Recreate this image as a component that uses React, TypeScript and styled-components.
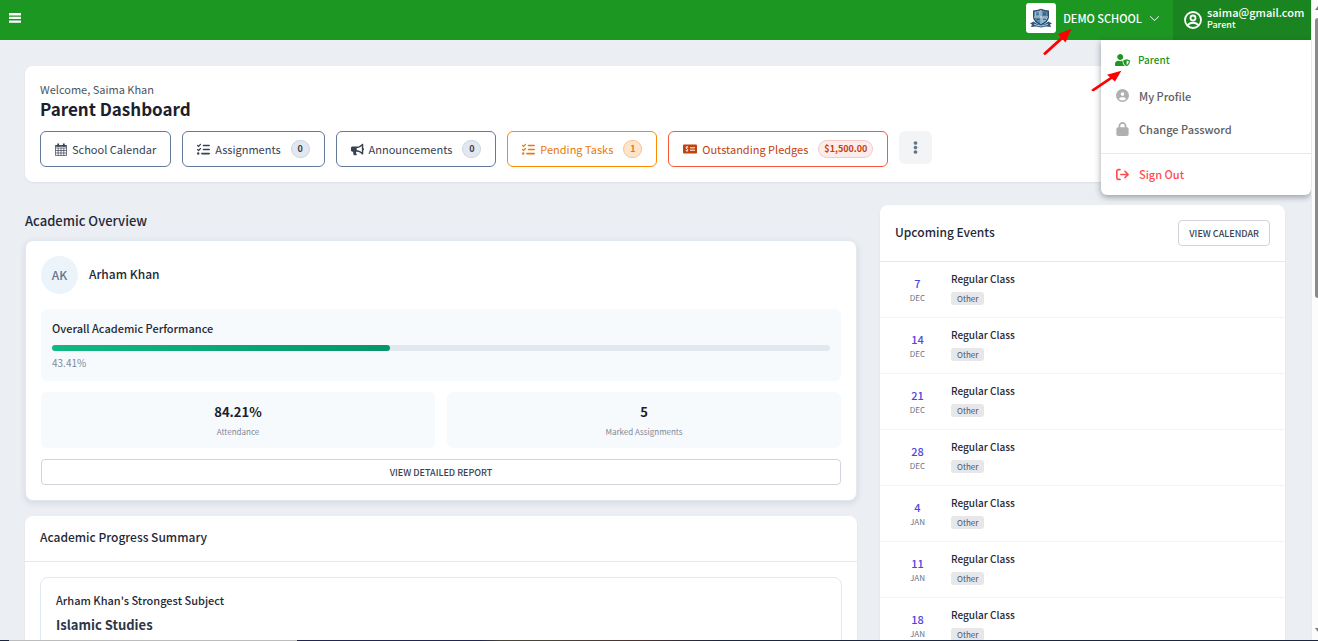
import React from 'react';
import styled, { createGlobalStyle, css } from 'styled-components';
import { FaBullhorn, FaEllipsisV, FaUserShield } from 'react-icons/fa';
import { FaCircleUser, FaListCheck, FaLock, FaArrowRightFromBracket } from 'react-icons/fa6';
import { BsChevronDown } from 'react-icons/bs';

const GlobalStyle = createGlobalStyle`
  * { box-sizing: border-box; }
  body {
    margin: 0;
    overflow: hidden;
    background: #ebeef3;
    color: #1f2937;
    font-family: "Noto Sans CJK SC", "Open Sans", sans-serif;
    font-size: 12px;
    line-height: 16px;
  }
  h1, h2, h3, h4, p, ul, dl, dd, dt { margin: 0; padding: 0; font-weight: inherit; }
  ul { list-style: none; }
  button { font: inherit; color: inherit; cursor: pointer; margin: 0; }
  a { text-decoration: none; color: inherit; }
`;

const Screen = styled.div`
  display: flex;
  flex-direction: column;
  height: 100vh;
`;

const Window = styled.div`
  display: flex;
  flex: 1;
  min-height: 0;
`;

const Page = styled.div`
  flex: 1;
  min-width: 0;
  overflow: hidden;
`;

const ScrollTrack = styled.div`
  display: flex;
  flex-direction: column;
  justify-content: space-between;
  align-items: flex-end;
  width: 7px;
  padding: 6px 0 8px;
  overflow: hidden;
  background: #fcfcfc;
  border-left: 1px solid #e8eaee;
`;

const ScrollThumb = styled.div`
  width: 3px;
  height: 280px;
  margin: 8px 0 auto;
  border-radius: 4px 0 0 4px;
  background: #8b8b8b;
`;

const TaskbarEdge = styled.div`
  height: 1px;
  background: linear-gradient(90deg, #1b2740 0 9px, #bcbcbc 9px 297px, #20264f 297px 480px, #4a4438 500px 545px, #4b3030 640px, #1b2740 720px);
`;

const Header = styled.header`
  position: relative;
  display: flex;
  align-items: center;
  height: 40px;
  background: #1c9722;
  color: #fff;
`;

const MenuToggle = styled.button`
  display: flex;
  margin-right: auto;
  padding: 8px 9px 12px;
  border: 0;
  background: none;
`;

const SchoolSwitch = styled.button`
  display: flex;
  align-items: center;
  gap: 7px;
  height: 40px;
  padding: 0 13px 4px 0;
  border: 0;
  background: none;
  font-size: 11px;
  font-weight: 500;
`;

const SchoolLogo = styled.span`
  display: grid;
  place-items: center;
  width: 30px;
  height: 30px;
  border-radius: 3px;
  background: #fff;
`;

const Account = styled.button`
  display: flex;
  align-items: center;
  gap: 4px;
  width: 138px;
  height: 40px;
  padding: 0 0 0 10px;
  border: 0;
  background: #1a8520;
  text-align: left;
`;

const AccountText = styled.span`
  display: flex;
  flex-direction: column;
  padding-bottom: 3px;
  font-size: 11px;
  line-height: 12px;
  font-weight: 500;
`;

const AccountRole = styled.span`
  font-size: 9px;
  line-height: 14px;
`;

const AccountMenu = styled.nav`
  position: absolute;
  top: 40px;
  right: 0;
  z-index: 2;
  width: 210px;
  padding: 5px 0 1px;
  border-radius: 0 0 6px 6px;
  background: #fff;
  box-shadow: 0 2px 6px rgba(40, 50, 60, 0.45);
`;

const MenuLink = styled.a<{ $tone?: 'active' | 'danger' }>`
  display: flex;
  align-items: center;
  gap: 9px;
  height: 33px;
  padding: 0 14px;
  color: #616161;
  font-size: 11px;
  font-weight: 500;
  svg { color: #b0b0b0; flex: none; width: 15px; }
  ${p => p.$tone === 'active' && css`
    gap: 8px;
    height: 30px;
    margin-bottom: 4px;
    color: #1c9722;
    font-size: 10px;
    svg { color: #1c9722; }
  `}
  ${p => p.$tone === 'danger' && css`
    margin-top: 8px;
    height: 41px;
    border-top: 1px solid #e6e8eb;
    color: #ff4d4f;
    svg { color: #ff4d4f; }
  `}
`;

const Pointer = styled.svg`
  position: absolute;
  z-index: 3;
  pointer-events: none;
`;
const SchoolPointer = styled(Pointer)`
  top: 28px;
  right: 238px;
`;
const RolePointer = styled(Pointer)`
  top: 70px;
  right: 188px;
`;

const Main = styled.main`
  padding: 26px 26px 0 25px;
`;

const Card = styled.section`
  border-radius: 8px;
  background: #fff;
  box-shadow: 0 1px 2px rgba(30, 50, 80, 0.08);
`;

const Welcome = styled(Card)`
  padding: 15px;
`;

const Greeting = styled.p`
  color: #4b5563;
  font-size: 11px;
`;

const PageTitle = styled.h1`
  color: #1a202c;
  font-size: 17px;
  line-height: 24px;
  font-weight: 700;
`;

const Actions = styled.div`
  display: flex;
  flex-wrap: wrap;
  gap: 11px;
  margin-top: 10px;
`;

type Tone = 'slate' | 'orange' | 'red';
const tones = {
  slate: { line: '#64789a', text: '#374151', fill: '#e2e8f0', edge: '#cbd5e1' },
  orange: { line: '#fb8c00', text: '#e8790c', fill: '#ffe4cc', edge: '#fbc28d' },
  red: { line: '#f9573b', text: '#c2410c', fill: '#fdecec', edge: '#f6c9c9' },
};

const Action = styled.button<{ $tone: Tone }>`
  display: flex;
  align-items: center;
  gap: 5px;
  height: 36px;
  padding: 0 14px;
  border: 1px solid ${p => tones[p.$tone].line};
  border-radius: 6px;
  background: #fff;
  color: ${p => tones[p.$tone].text};
  font-size: 11px;
`;

const Badge = styled.span<{ $tone: Tone }>`
  display: grid;
  place-items: center;
  min-width: 19px;
  height: 18px;
  margin-left: 5px;
  padding: 0 5px;
  border: 1px solid ${p => tones[p.$tone].edge};
  border-radius: 10px;
  background: ${p => tones[p.$tone].fill};
  font-size: 9px;
  font-weight: 700;
`;

const MoreButton = styled.button`
  display: grid;
  place-items: center;
  width: 33px;
  height: 33px;
  border: 0;
  border-radius: 6px;
  background: #f3f4f6;
  color: #64748b;
`;

const Columns = styled.div`
  display: grid;
  grid-template-columns: minmax(0, 1fr) 405px;
  gap: 23px;
  align-items: start;
  margin-top: 23px;
`;

const SectionTitle = styled.h2`
  margin: 7px 0 10px;
  font-size: 13px;
  line-height: 18px;
  font-weight: 500;
`;

const StudentCard = styled(Card)`
  margin-bottom: 15px;
  padding: 15px;
  border: 1px solid #e2e8f0;
  box-shadow: 0 2px 6px rgba(40, 60, 90, 0.12);
`;

const Student = styled.div`
  display: flex;
  align-items: center;
  gap: 11px;
  margin-bottom: 15px;
`;

const Avatar = styled.span`
  display: grid;
  place-items: center;
  width: 37px;
  height: 38px;
  border-radius: 50%;
  background: #ebf4fb;
  color: #64748b;
  font-weight: 500;
`;

const StudentName = styled.h3`
  padding-bottom: 2px;
  font-size: 12px;
  font-weight: 500;
`;

const Panel = styled.div`
  padding: 10px 11px 11px;
  border-radius: 6px;
  background: #f7fafc;
`;

const PanelTitle = styled.h4`
  font-size: 11px;
  line-height: 18px;
  font-weight: 500;
`;

const Meter = styled.div`
  height: 6px;
  margin: 8px 0 5px;
  border-radius: 3px;
  background: #e2e8f0;
`;

const MeterFill = styled.div`
  height: 100%;
  border-radius: 3px;
  background: linear-gradient(90deg, #10b981, #059669);
`;

const Muted = styled.p`
  color: #808897;
  font-size: 10px;
  line-height: 14px;
`;

const Stats = styled.dl`
  display: grid;
  grid-template-columns: 1fr 1fr;
  gap: 12px;
  margin: 11px 0;
`;

const Stat = styled.div`
  display: flex;
  flex-direction: column-reverse;
  gap: 2px;
  padding: 10px 10px 8px;
  border-radius: 6px;
  background: #f7fafc;
  text-align: center;
`;

const StatValue = styled.dd`
  color: #1a202c;
  font-size: 13px;
  line-height: 20px;
  font-weight: 700;
`;

const StatLabel = styled.dt`
  color: #808897;
  font-size: 8px;
`;

const OutlineButton = styled.button<{ $full?: boolean }>`
  width: ${p => (p.$full ? '100%' : 'auto')};
  height: 26px;
  padding: 1px 10px 0;
  border: 1px solid #d1d5db;
  border-radius: 4px;
  background: #fff;
  color: #374151;
  font-size: 9px;
  font-weight: 500;
`;

const CardHeader = styled.div`
  display: flex;
  align-items: center;
  justify-content: space-between;
  padding: 15px;
  border-bottom: 1px solid #e5e7eb;
`;

const CardTitle = styled.h2`
  padding-bottom: 3px;
  font-size: 12px;
  line-height: 12px;
  font-weight: 500;
`;

const Subject = styled.div`
  margin: 15px;
  padding: 13px 15px;
  border: 1px solid #e2e8f0;
  border-radius: 8px;
`;

const SubjectName = styled.p`
  margin: 6px 0 60px;
  color: #2d3748;
  font-size: 13px;
  line-height: 20px;
  font-weight: 700;
`;

const EventRow = styled.li`
  display: flex;
  height: 56px;
  padding: 9px 15px;
  border-bottom: 1px solid #f3f4f6;
`;

const EventDate = styled.time`
  display: flex;
  flex-direction: column;
  width: 45px;
  margin-right: 11px;
  padding-top: 4px;
  color: #4f46e5;
  font-size: 11px;
  font-weight: 500;
  text-align: center;
`;

const Month = styled.span`
  color: #6b7280;
  font-size: 8px;
  line-height: 14px;
  font-weight: 400;
`;

const EventTitle = styled.h3`
  font-size: 10px;
  font-weight: 500;
`;

const Tag = styled.span`
  display: block;
  width: fit-content;
  margin-top: 5px;
  padding: 0 6px;
  border-radius: 3px;
  background: #e5e7eb;
  color: #4b5563;
  font-size: 8px;
  line-height: 13px;
`;

function BarsIcon() {
  return (
    <svg width="12" height="10" viewBox="0 0 12 10" fill="currentColor">
      <path d="M0 0h12v2.400H0zM0 3.700h12v2.400H0zM0 7.400h12v2.400H0z" />
    </svg>
  );
}

function CalendarIcon() {
  return (
    <svg width="12" height="13" viewBox="0 0 12 13" fill="none" stroke="currentColor">
      <path d="M.5 2.500h11v10H.5zM.5 5h11M.5 7.500h11M.5 10h11M3.200 5v7.500M6 5v7.500M8.800 5v7.500" strokeWidth=".7" />
      <path d="M.5 3h11" strokeWidth="1.500" />
      <path d="M3.200.5v3M8.800.5v3" strokeWidth="1.800" />
    </svg>
  );
}

function MoneyIcon() {
  return (
    <svg width="14" height="10" viewBox="0 0 14 10" fill="none">
      <rect width="14" height="9" y=".5" rx="1" fill="currentColor" />
      <path d="M5.200 3.500Q4 2.700 3.300 3.200 2.500 4.200 3.900 4.900 5.500 5.600 4.700 6.500 3.800 7 2.700 6.300M4 2.200v.8M4 6.900v.8M7 3.800h5M7 6.200h5" stroke="#fff" strokeWidth="1" />
    </svg>
  );
}

function CrestIcon() {
  return (
    <svg width="22" height="20" viewBox="0 0 22 20">
      <path d="M3 2.500Q7 2.500 11 .8 15 2.500 19 2.500V9q0 5-8 8.500Q3 14 3 9z" fill="#2b4c6f" />
      <path d="M4.500 3.800Q8 3.600 10.300 2.500V8.300H4.500zM11.700 9.700h5.800q-.5 3.300-5.800 5.800z" fill="#8cc3d8" />
      <path d="M11.700 2.500q2.300 1.100 5.800 1.300v4.500h-5.800zM4.500 9.700h5.800v5.800Q5 13 4.500 9.700z" fill="#5b8fae" />
      <path d="M11 2v14M4 9h14" stroke="#eef7fa" strokeWidth="1" />
      <path d="M6 5h3M6 6.800h3M13 5h3M13 6.800h3M6.500 11.300h3M13 11.300h3" stroke="#234668" strokeWidth=".9" />
      <path d="M0 15.500 3.500 13.500Q7 16.500 11 17q4-.5 7.500-3.500L22 15.500l-2 1 1 2.500-5-.5-5 1-5-1-5 .5 1-2.500z" fill="#31587f" />
      <path d="M4 16.200q3.500 1.500 7 1.800 3.500-.3 7-1.800" stroke="#c5dbe6" strokeWidth=".9" fill="none" />
    </svg>
  );
}

function AccountIcon() {
  return (
    <svg width="20" height="20" viewBox="0 0 20 20" fill="none" stroke="#fff" strokeWidth="1.800">
      <circle cx="10" cy="10" r="8" />
      <circle cx="10" cy="8" r="2.500" />
      <path d="M4.500 15q5.500-4.500 11 0" />
    </svg>
  );
}

function ArrowShape() {
  return (
    <>
      <path d="M2 25.500 19 10" stroke="#fe0000" strokeWidth="3" strokeLinecap="round" />
      <path d="M28.500 .8 22.500 14.500 15 6z" fill="#fe0000" />
    </>
  );
}

const events = [
  [7, 'DEC'], [14, 'DEC'], [21, 'DEC'], [28, 'DEC'], [4, 'JAN'], [11, 'JAN'], [18, 'JAN'],
] as const;

const performance = 43.41;

export default function App() {
  return (
    <Screen>
      <GlobalStyle />
      <Window>
        <Page>
          <Header>
            <MenuToggle aria-label="Toggle menu"><BarsIcon /></MenuToggle>
            <SchoolSwitch>
              <SchoolLogo><CrestIcon /></SchoolLogo>
              DEMO SCHOOL
              <BsChevronDown size={11} />
            </SchoolSwitch>
            <Account>
              <AccountIcon />
              <AccountText>saima@gmail.com<AccountRole>Parent</AccountRole></AccountText>
            </Account>
            <AccountMenu>
              <MenuLink href="#parent" $tone="active"><FaUserShield size={14} />Parent</MenuLink>
              <MenuLink href="#profile"><FaCircleUser size={13} />My Profile</MenuLink>
              <MenuLink href="#password"><FaLock size={14} />Change Password</MenuLink>
              <MenuLink href="#signout" $tone="danger"><FaArrowRightFromBracket size={13} />Sign Out</MenuLink>
            </AccountMenu>
            <SchoolPointer width="30" height="28" viewBox="0 0 30 28"><ArrowShape /></SchoolPointer>
            <RolePointer width="32" height="22" viewBox="0 0 30 28" preserveAspectRatio="none"><ArrowShape /></RolePointer>
          </Header>
          <Main>
            <Welcome>
              <Greeting>Welcome, Saima Khan</Greeting>
              <PageTitle>Parent Dashboard</PageTitle>
              <Actions>
                <Action $tone="slate"><CalendarIcon />School Calendar</Action>
                <Action $tone="slate"><FaListCheck size={13} />Assignments<Badge $tone="slate">0</Badge></Action>
                <Action $tone="slate"><FaBullhorn size={13} />Announcements<Badge $tone="slate">0</Badge></Action>
                <Action $tone="orange"><FaListCheck size={13} />Pending Tasks<Badge $tone="orange">1</Badge></Action>
                <Action $tone="red"><MoneyIcon />Outstanding Pledges<Badge $tone="red">$1,500.00</Badge></Action>
                <MoreButton aria-label="More actions"><FaEllipsisV size={13} /></MoreButton>
              </Actions>
            </Welcome>
            <Columns>
              <div>
                <SectionTitle>Academic Overview</SectionTitle>
                <StudentCard>
                  <Student><Avatar>AK</Avatar><StudentName>Arham Khan</StudentName></Student>
                  <Panel>
                    <PanelTitle>Overall Academic Performance</PanelTitle>
                    <Meter><MeterFill style={{ width: `${performance}%` }} /></Meter>
                    <Muted>{performance}%</Muted>
                  </Panel>
                  <Stats>
                    <Stat><StatLabel>Attendance</StatLabel><StatValue>84.21%</StatValue></Stat>
                    <Stat><StatLabel>Marked Assignments</StatLabel><StatValue>5</StatValue></Stat>
                  </Stats>
                  <OutlineButton $full>VIEW DETAILED REPORT</OutlineButton>
                </StudentCard>
                <Card>
                  <CardHeader><CardTitle>Academic Progress Summary</CardTitle></CardHeader>
                  <Subject>
                    <PanelTitle>Arham Khan's Strongest Subject</PanelTitle>
                    <SubjectName>Islamic Studies</SubjectName>
                  </Subject>
                </Card>
              </div>
              <Card>
                <CardHeader><CardTitle>Upcoming Events</CardTitle><OutlineButton>VIEW CALENDAR</OutlineButton></CardHeader>
                <ul>
                  {events.map(([day, month]) => (
                    <EventRow key={`${month}${day}`}>
                      <EventDate>{day}<Month>{month}</Month></EventDate>
                      <div><EventTitle>Regular Class</EventTitle><Tag>Other</Tag></div>
                    </EventRow>
                  ))}
                </ul>
              </Card>
            </Columns>
          </Main>
        </Page>
        <ScrollTrack aria-hidden="true">
          <svg width="3" height="4" viewBox="0 0 3 4"><path d="M0 4 3 0v4z" fill="#7d7d7d" /></svg>
          <ScrollThumb />
          <svg width="3" height="4" viewBox="0 0 3 4"><path d="M0 0h3v4z" fill="#7d7d7d" /></svg>
        </ScrollTrack>
      </Window>
      <TaskbarEdge />
    </Screen>
  );
}
